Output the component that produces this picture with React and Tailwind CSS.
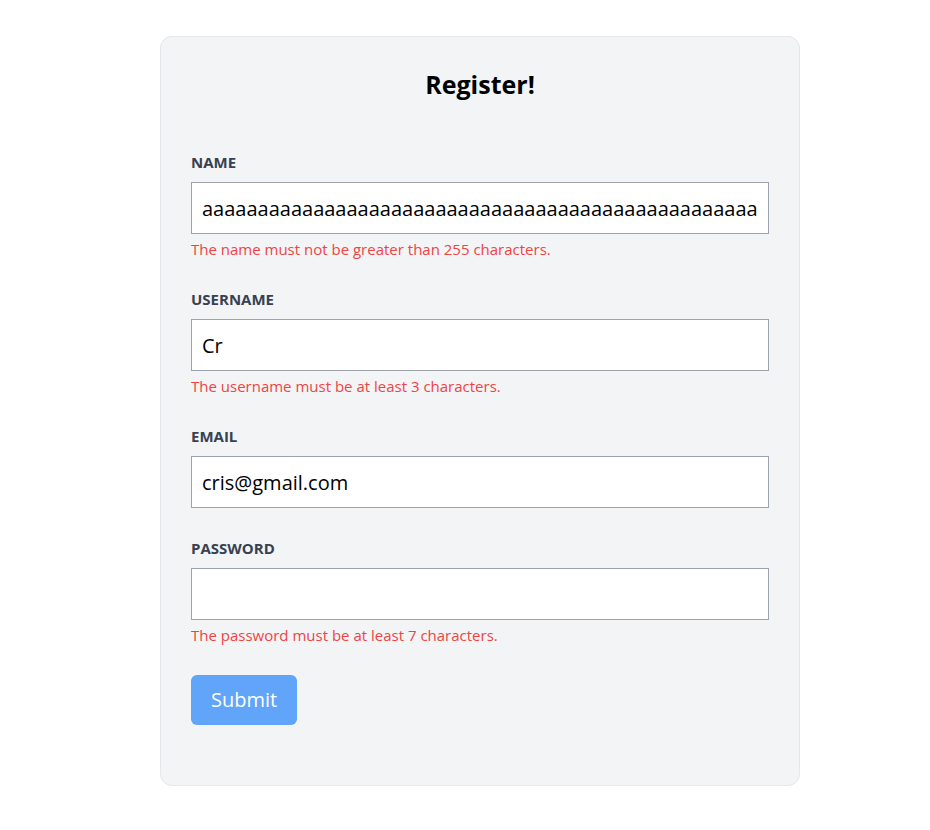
const Field = ({ label, value, type = "text", error }) => {
    return (
        <div>
            <label className="block text-[15px] font-bold text-[#374151] mb-2.5 leading-5">{label}</label>
            <input
                type={type}
                value={value}
                readOnly
                className="w-full h-[52px] px-2.5 border border-[#9ca3af] bg-white text-xl text-black outline-none"
            />
            {error && <p className="mt-[5px] text-[15px] leading-5 text-[#ef4444]">{error}</p>}
        </div>
    );
};

const App = () => {
    return (
        <div className="min-h-screen bg-white pt-9" style={{ fontFamily: "'Open Sans', sans-serif" }}>
            <div className="w-[640px] ml-40 bg-[#f3f4f6] border border-[#e5e7eb] rounded-xl px-[30px] pt-8 pb-[60px]">
                <h1 className="text-[25px] leading-[30px] font-bold text-black text-center">Register!</h1>

                <form className="mt-[53px] flex flex-col gap-[30px]" onSubmit={(e) => e.preventDefault()}>
                    <Field
                        label="NAME"
                        value={"a".repeat(80)}
                        error="The name must not be greater than 255 characters."
                    />
                    <Field label="USERNAME" value="Cr" error="The username must be at least 3 characters." />
                    <Field label="EMAIL" value="cris@gmail.com" />
                    <Field
                        label="PASSWORD"
                        type="password"
                        value=""
                        error="The password must be at least 7 characters."
                    />
                    <div>
                        <button type="submit" className="h-[50px] px-5 bg-[#60a5fa] text-white text-xl rounded-md">
                            Submit
                        </button>
                    </div>
                </form>
            </div>
        </div>
    );
};

export default App;
